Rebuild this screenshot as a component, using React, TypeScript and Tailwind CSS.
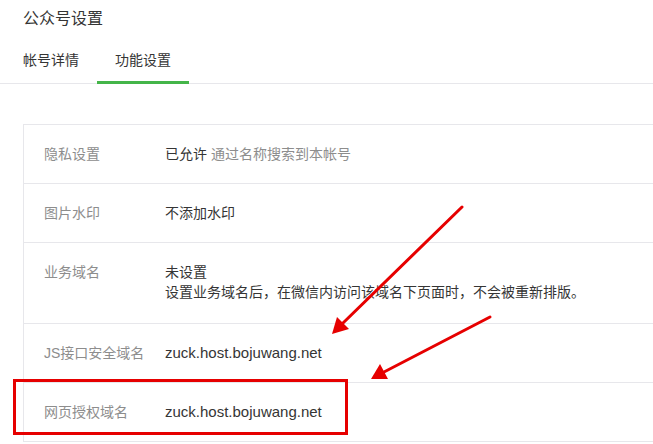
import React from "react";

const font = { fontFamily: '"Liberation Sans", "Noto Sans CJK SC", sans-serif' };

function Row({ label, children, tall }: { label: string; children: React.ReactNode; tall?: boolean }) {
  return (
    <div className={`flex items-start border-b border-[#e7e7eb] pt-[19px] ${tall ? "h-[81px]" : "h-[59px]"}`}>
      <div className="w-[141px] pl-[20px] text-[14px] leading-[20px] text-[#8d8d8d]">{label}</div>
      <div className="text-[14px] leading-[20px] text-[#353535]">{children}</div>
    </div>
  );
}

export default function App() {
  return (
    <div className="relative w-[653px] h-[444px] overflow-hidden bg-white" style={font}>
      <div className="h-[40px] pt-[8px] pl-[23px] text-[16px] leading-[22px] text-[#353535]">公众号设置</div>
      <div className="flex h-[44px] border-b border-[#e7e7eb] pl-[5px]">
        <div className="h-[44px] -mb-px px-[18px] flex items-center pb-[3px] text-[14px] text-[#353535]">帐号详情</div>
        <div className="h-[44px] -mb-px px-[18px] flex items-center border-b-[3px] border-[#44b549] text-[14px] text-[#353535]">功能设置</div>
      </div>
      <div className="ml-[23px] mt-[40px] border-l border-t border-[#e7e7eb]">
        <Row label="隐私设置">
          已允许 <span className="text-[#8d8d8d]">通过名称搜索到本帐号</span>
        </Row>
        <Row label="图片水印">不添加水印</Row>
        <Row label="业务域名" tall>
          <div>未设置</div>
          <div>设置业务域名后，在微信内访问该域名下页面时，不会被重新排版。</div>
        </Row>
        <Row label="JS接口安全域名">
          <span className="text-[15px]">zuck.host.bojuwang.net</span>
        </Row>
        <Row label="网页授权域名">
          <span className="text-[15px]">zuck.host.bojuwang.net</span>
        </Row>
      </div>
      <div className="absolute left-[13px] top-[379px] w-[335px] h-[56px] border-[3px] border-[#e60000]" />
      <svg className="absolute left-0 top-0" width="653" height="444" viewBox="0 0 653 444">
        <line x1="462" y1="207" x2="342" y2="324" stroke="#e60000" strokeWidth="3" strokeLinecap="round" />
        <polygon points="332,334 337,317 349,329" fill="#e60000" />
        <line x1="490" y1="317" x2="384" y2="372" stroke="#e60000" strokeWidth="3" strokeLinecap="round" />
        <polygon points="371,379 380,364 388,379" fill="#e60000" />
      </svg>
    </div>
  );
}
